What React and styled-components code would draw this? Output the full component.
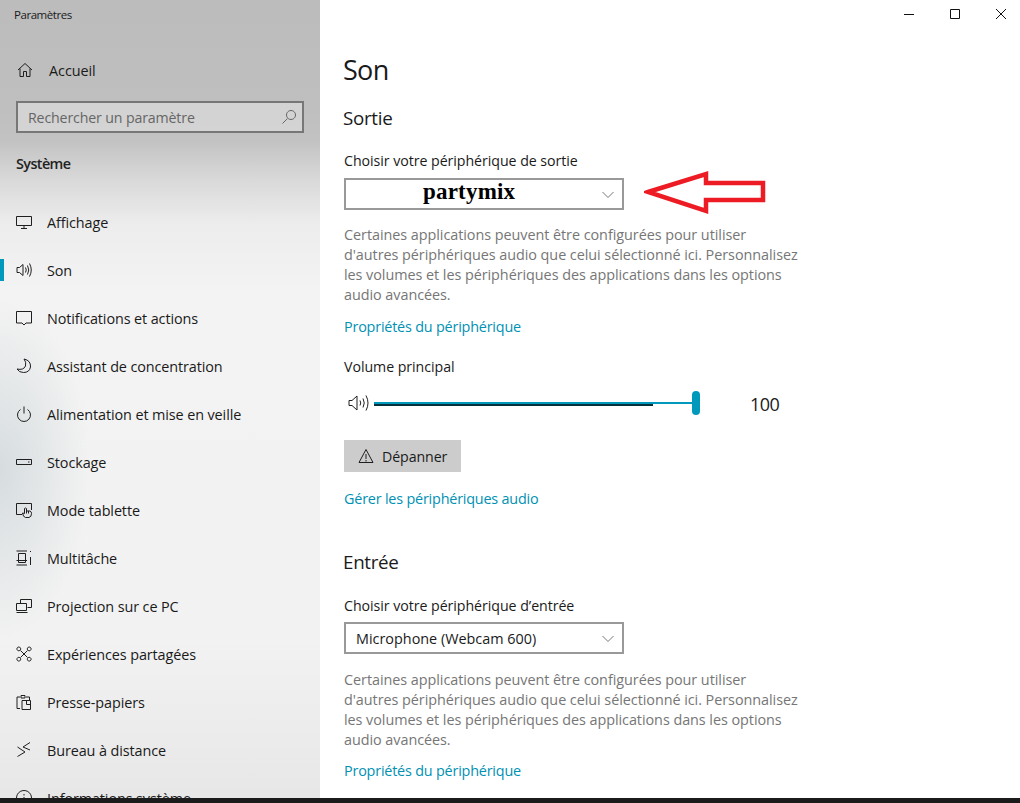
import React from 'react';
import styled, { createGlobalStyle } from 'styled-components';

const GlobalStyle = createGlobalStyle`
  html, body {
    margin: 0;
    padding: 0;
    background: #fff;
    overflow: hidden;
  }
  * {
    box-sizing: border-box;
  }
`;

const Window = styled.div`
  width: 1020px;
  height: 803px;
  display: flex;
  flex-direction: column;
  overflow: hidden;
  font-family: "Open Sans", "Noto Sans", sans-serif;
  color: #1a1a1a;
`;
const Body = styled.div`
  flex: 1;
  min-height: 0;
  display: flex;
`;
const BottomBar = styled.div`
  height: 5px;
  flex: none;
  background: #1b1b1b;
`;
const Sidebar = styled.aside`
  width: 320px;
  flex: none;
  overflow: hidden;
  background:
    radial-gradient(ellipse 90px 170px at 0 470px, rgba(205, 213, 216, 0.75), rgba(205, 213, 216, 0) 100%),
    linear-gradient(180deg, #bcbcbc 0, #bfbfbf 110px, #c2c2c2 140px, #d9d9d9 180px, #ededed 225px, #f3f3f3 290px, #f2f2f2 640px, #e7e7e7 798px);
`;
const AppTitle = styled.div`
  font-size: 11.5px;
  line-height: 16px;
  letter-spacing: -0.45px;
  padding: 7px 0 0 14px;
`;
const HomeRow = styled.div`
  display: flex;
  align-items: center;
  height: 48px;
  margin-top: 23px;
  padding-left: 17px;
  font-size: 14.4px;
  letter-spacing: -0.05px;
`;
const HomeLabel = styled.span`
  margin-left: 16px;
`;
const Search = styled.div`
  margin: 7px 0 0 16px;
  width: 288px;
  height: 32px;
  border: 2px solid #777;
  background: rgba(235, 235, 235, 0.45);
  display: flex;
  align-items: center;
  justify-content: space-between;
  padding: 0 5px 0 10px;
  font-size: 14.2px;
  letter-spacing: -0.15px;
  color: #666;
`;
const SectionName = styled.div`
  margin: 20px 0 0 16px;
  font-size: 14.4px;
  line-height: 22px;
  font-weight: 600;
  letter-spacing: -0.6px;
  color: #222;
`;
const Nav = styled.nav`
  margin-top: 23px;
`;
const NavRow = styled.div`
  position: relative;
  display: flex;
  align-items: center;
  height: 48px;
  padding-left: 16px;
  font-size: 14.4px;
  letter-spacing: -0.1px;
  white-space: nowrap;
`;
const ActiveMark = styled.span`
  position: absolute;
  left: 0;
  top: 13px;
  width: 4px;
  height: 22px;
  background: #0099bc;
`;
const NavIcon = styled.span`
  width: 16px;
  height: 16px;
  display: flex;
  flex: none;
  margin-right: 15px;
`;
const Main = styled.main`
  flex: 1;
  min-width: 0;
  position: relative;
  padding: 50px 0 0 24px;
`;
const WindowButtons = styled.div`
  position: absolute;
  top: 0;
  right: 1px;
  display: flex;
  gap: 10px;
`;
const WindowButton = styled.div`
  width: 36px;
  height: 28px;
  display: flex;
  align-items: center;
  justify-content: center;
`;
const PageTitle = styled.h1`
  margin: 0 0 0 -1px;
  font-size: 27px;
  line-height: 40px;
  font-weight: 400;
  letter-spacing: -0.7px;
`;
const SectionTitle = styled.h2`
  margin: ${(p) => p.$top}px 0 0 -1px;
  font-size: 18.8px;
  line-height: 28px;
  font-weight: 400;
  letter-spacing: -0.3px;
`;
const FieldLabel = styled.div`
  margin-top: ${(p) => p.$top}px;
  font-size: 14.2px;
  line-height: 20px;
  letter-spacing: -0.05px;
`;
const Select = styled.div`
  margin-top: ${(p) => p.$top}px;
  width: 280px;
  height: 32px;
  border: 2px solid #999;
  display: flex;
  align-items: center;
  position: relative;
  padding-left: 10px;
  font-size: 14.4px;
  letter-spacing: 0;
`;
const PartyName = styled.span`
  position: absolute;
  left: 77px;
  top: 0;
  font-family: "Liberation Serif", serif;
  font-weight: 700;
  font-size: 23px;
  line-height: 24px;
  letter-spacing: 0.2px;
  color: #000;
`;
const Chevron = styled.svg`
  position: absolute;
  right: 8px;
  top: 11px;
`;
const Help = styled.p`
  margin: ${(p) => p.$top}px 0 0;
  font-size: 14.4px;
  line-height: 20px;
  letter-spacing: -0.05px;
  color: #767676;
`;
const HelpLine = styled.span`
  display: block;
  white-space: nowrap;
`;
const Link = styled.a`
  display: block;
  margin-top: ${(p) => p.$top}px;
  font-size: 14.4px;
  line-height: 20px;
  letter-spacing: -0.2px;
  color: #0091b3;
`;
const Arrow = styled.svg`
  position: absolute;
  left: 324px;
  top: 170px;
`;
const VolumeRow = styled.div`
  margin-top: 14px;
  display: flex;
  align-items: center;
  height: 24px;
`;
const SpeakerIcon = styled.svg`
  margin-left: 4px;
  flex: none;
`;
const Track = styled.div`
  position: relative;
  width: 326px;
  height: 24px;
`;
const TrackLine = styled.span`
  position: absolute;
  left: 0;
  top: 11px;
  width: 100%;
  height: 2px;
  background: #0099bc;
`;
const TrackShadow = styled.span`
  position: absolute;
  left: 0;
  top: 13px;
  width: 279px;
  height: 2px;
  background: #06323e;
`;
const Thumb = styled.span`
  position: absolute;
  right: 0;
  top: 0;
  width: 8px;
  height: 24px;
  border-radius: 4px;
  background: #0099bc;
`;
const VolumeValue = styled.span`
  margin: 2px 0 0 50px;
  font-size: 18px;
  letter-spacing: -0.5px;
`;
const FixButton = styled.div`
  margin-top: 25px;
  width: 117px;
  height: 32px;
  background: #cccccc;
  display: flex;
  align-items: center;
  padding-left: 14px;
  font-size: 14.2px;
  letter-spacing: -0.1px;
  gap: 8px;
`;

const stroke = { fill: 'none', stroke: '#1f1f1f', strokeWidth: 1 };

const icons = {
  home: <path d="M1 8 8 1.5 15 8M3 6.5V14.5H6.5V9.5H9.5V14.5H13V6.5" />,
  display: <path d="M.5 2.5H15.5V11.5H.5ZM8 11.5V14M5 14.5H11" />,
  sound: <path d="M1 5.5H3.5L7 2.5V13.5L3.5 10.5H1ZM9.5 5.5Q11 8 9.5 10.5M11.5 3.5Q14 8 11.5 12.5M13.5 1.5Q17 8 13.5 14.5" />,
  notify: <path d="M.5 1.5H15.5V13H10L8 15 6 13H.5Z" />,
  moon: <path d="M8 1Q15 2.500 14.500 9 13.500 14.500 7.500 14.500 3 14.500 1 11 7.500 12.500 9.500 8 10.500 4 8 1Z" />,
  power: <path d="M8 .5V7.500M4.500 3.500A6.500 6.500 0 1 0 11.500 3.500" />,
  storage: <path d="M.5 5.500H15.500V10.500H.5ZM12 8H13.500" />,
  tablet: <path d="M6 12.500H.5V1.500H15.500V8M9.500 15.500Q7 15 6.500 11L8.500 11.500V6.500Q9.500 5.500 10.500 6.500V9H14Q15.500 9.500 15.500 11.500 15.500 15 13 15.500ZM10.500 9V11.500M12.500 9V11.500" />,
  multi: <path d="M.5 1H11M.5 15H11M2.500 3.500H9.500V12.500H2.500ZM.5 10.500H11M14.500 1V2M14.500 7V15" />,
  project: <path d="M4.500 5V1.500H15.500V9.500H11.500M.5 5.500H10.500V12.500H.5ZM.5 14.500H11.500" />,
  shared: <path d="M4.500 4.500 11.500 11.500M11.500 4.500 4.500 11.500M2.800 1A1.900 1.900 0 1 0 2.810 1ZM13.200 1A1.900 1.900 0 1 0 13.210 1ZM2.800 11.300A1.900 1.900 0 1 0 2.810 11.300ZM13.200 11.300A1.900 1.900 0 1 0 13.210 11.300Z" />,
  clip: <path d="M4 14.500H1V3H4M10 3H13.500V6M5 1.500H9V4H5ZM6 6.500H14.500V15.500H6ZM10.500 6.500V10.500H14.500" />,
  remote: <path d="M1.500 5 9 10 1.500 14.500M14 .5 7 5 14 8" />,
  info: <path d="M8 .5A7.500 7.500 0 1 0 8.010 .5ZM8 7V12M8 4V5.500" />,
};

function Icon({ name }) {
  return (
    <svg width="16" height="16" viewBox="0 0 16 16" {...stroke}>
      {icons[name]}
    </svg>
  );
}

const navItems = [
  ['display', 'Affichage'],
  ['sound', 'Son', true],
  ['notify', 'Notifications et actions'],
  ['moon', 'Assistant de concentration'],
  ['power', 'Alimentation et mise en veille'],
  ['storage', 'Stockage'],
  ['tablet', 'Mode tablette'],
  ['multi', 'Multitâche'],
  ['project', 'Projection sur ce PC'],
  ['shared', 'Expériences partagées'],
  ['clip', 'Presse-papiers'],
  ['remote', 'Bureau à distance'],
  ['info', 'Informations système'],
];

function ChevronDown() {
  return (
    <Chevron width="12" height="8" viewBox="0 0 12 8" fill="none" stroke="#777" strokeWidth="1">
      <path d="M.5 1 6 6.500 11.500 1" />
    </Chevron>
  );
}

// line breaks of the original, the fallback font wraps them differently
const helpLines = [
  'Certaines applications peuvent être configurées pour utiliser',
  "d'autres périphériques audio que celui sélectionné ici. Personnalisez",
  'les volumes et les périphériques des applications dans les options',
  'audio avancées.',
];

function HelpText({ top }) {
  return (
    <Help $top={top}>
      {helpLines.map((line) => <HelpLine key={line}>{line}</HelpLine>)}
    </Help>
  );
}

export default function App() {
  return (
    <Window>
      <GlobalStyle />
      <Body>
        <Sidebar>
          <AppTitle>Paramètres</AppTitle>
          <HomeRow>
            <Icon name="home" />
            <HomeLabel>Accueil</HomeLabel>
          </HomeRow>
          <Search>
            Rechercher un paramètre
            <svg width="16" height="16" viewBox="0 0 16 16" fill="none" stroke="#666" strokeWidth="1">
              <path d="M10 1.500A4.500 4.500 0 1 0 10.010 1.500ZM6.500 9.500 1.500 14.500" />
            </svg>
          </Search>
          <SectionName>Système</SectionName>
          <Nav>
            {navItems.map(([icon, label, active]) => (
              <NavRow key={label}>
                {active && <ActiveMark />}
                <NavIcon><Icon name={icon} /></NavIcon>
                {label}
              </NavRow>
            ))}
          </Nav>
        </Sidebar>
        <Main>
          <WindowButtons>
            <WindowButton>
              <svg width="10" height="10" viewBox="0 0 10 10" stroke="#111" fill="none"><path d="M0 5.500H10" /></svg>
            </WindowButton>
            <WindowButton>
              <svg width="10" height="10" viewBox="0 0 10 10" stroke="#111" fill="none"><path d="M.5 .5H9.500V9.500H.5Z" /></svg>
            </WindowButton>
            <WindowButton>
              <svg width="10" height="10" viewBox="0 0 10 10" stroke="#111" fill="none"><path d="M0 0 10 10M10 0 0 10" /></svg>
            </WindowButton>
          </WindowButtons>
          <PageTitle>Son</PageTitle>
          <SectionTitle $top={14}>Sortie</SectionTitle>
          <FieldLabel $top={19}>Choisir votre périphérique de sortie</FieldLabel>
          <Select $top={7}>
            <PartyName>partymix</PartyName>
            <ChevronDown />
          </Select>
          <Arrow width="124" height="46" viewBox="0 0 124 46" fill="none" stroke="#ed1c24" strokeWidth="4.5">
            <path d="M4 22 62 4V13H119V30H62V41Z" />
          </Arrow>
          <HelpText top={15} />
          <Link $top={12}>Propriétés du périphérique</Link>
          <FieldLabel $top={20}>Volume principal</FieldLabel>
          <VolumeRow>
            <SpeakerIcon width="26" height="18" viewBox="0 0 26 18" fill="none" stroke="#1f1f1f" strokeWidth="1">
              <path d="M1 6.500H4L9 2V16L4 11.500H1ZM12 6.500Q13.500 9 12 11.500M15 4.500Q17.500 9 15 13.500M18 1.500Q22 9 18 16.500" />
            </SpeakerIcon>
            <Track>
              <TrackLine />
              <TrackShadow />
              <Thumb />
            </Track>
            <VolumeValue>100</VolumeValue>
          </VolumeRow>
          <FixButton>
            <svg width="16" height="16" viewBox="0 0 16 16" fill="none" stroke="#1f1f1f" strokeWidth="1">
              <path d="M8 1.500 15 14.500H1ZM8 6V11M8 12V13.500" />
            </svg>
            Dépanner
          </FixButton>
          <Link $top={17}>Gérer les périphériques audio</Link>
          <SectionTitle $top={39}>Entrée</SectionTitle>
          <FieldLabel $top={20}>Choisir votre périphérique d’entrée</FieldLabel>
          <Select $top={6}>
            Microphone (Webcam 600)
            <ChevronDown />
          </Select>
          <HelpText top={16} />
          <Link $top={11}>Propriétés du périphérique</Link>
        </Main>
      </Body>
      <BottomBar />
    </Window>
  );
}
